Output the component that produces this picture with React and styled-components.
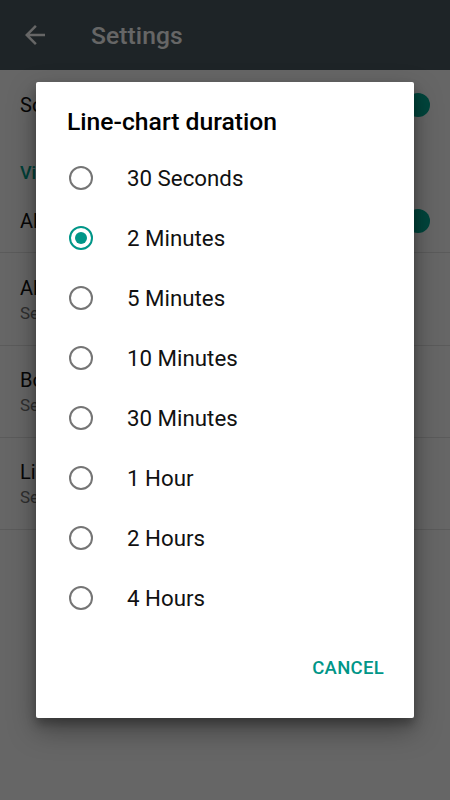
import React from "react";
import styled, { createGlobalStyle } from "styled-components";

const Global = createGlobalStyle`
  html, body { margin: 0; padding: 0; background: #ffffff; }
  body { font-family: Roboto, "Noto Sans", "Liberation Sans", sans-serif; }
  * { box-sizing: border-box; }
`;

const Page = styled.div`
  position: relative;
  width: 450px;
  height: 800px;
  overflow: hidden;
  background: #ffffff;
`;

const Toolbar = styled.header`
  height: 70px;
  background: #4c5b61;
  display: flex;
  align-items: center;
  padding-left: 20px;
  gap: 41px;
  color: #ffffff;
`;

const ToolbarTitle = styled.h1`
  margin: 0;
  font-size: 24.6px;
  font-weight: 500;
  letter-spacing: 0.1px;
`;

const List = styled.div`
  display: flex;
  flex-direction: column;
`;

const Row = styled.div`
  height: ${(p) => p.$h}px;
  display: flex;
  align-items: center;
  justify-content: space-between;
  padding: 0 20px;
  border-bottom: ${(p) => (p.$divider ? "1px solid #e4e4e4" : "none")};
`;

const RowText = styled.div`
  display: flex;
  flex-direction: column;
  gap: 3px;
`;

const RowTitle = styled.div`
  font-size: 20px;
  color: #111;
`;

const RowSub = styled.div`
  font-size: 17px;
  color: #757575;
`;

const Section = styled.div`
  height: 50px;
  display: flex;
  align-items: flex-end;
  padding: 0 20px 7px;
  font-size: 18px;
  font-weight: 500;
  color: #00a08c;
`;

const Switch = styled.div`
  position: relative;
  width: 40px;
  height: 16px;
  border-radius: 8px;
  background: #80cbc0;
  margin-right: 6px;
`;

const Thumb = styled.div`
  position: absolute;
  right: -6px;
  top: -4px;
  width: 24px;
  height: 24px;
  border-radius: 50%;
  background: #00ad96;
`;

const Scrim = styled.div`
  position: absolute;
  inset: 0;
  background: rgba(0, 0, 0, 0.6);
`;

const Dialog = styled.div`
  position: absolute;
  left: 36px;
  top: 82px;
  width: 378px;
  height: 636px;
  background: #ffffff;
  border-radius: 2px;
  box-shadow: 0 12px 28px rgba(0, 0, 0, 0.35), 0 6px 10px rgba(0, 0, 0, 0.25);
  display: flex;
  flex-direction: column;
`;

const DialogTitle = styled.h2`
  margin: 0;
  padding: 26px 31px 12px;
  line-height: 28px;
  font-size: 24.7px;
  font-weight: 500;
  color: #000;
`;

const Options = styled.div`
  display: flex;
  flex-direction: column;
`;

const Option = styled.label`
  height: 60px;
  display: flex;
  align-items: center;
  padding-left: 33px;
  gap: 34px;
  font-size: 22.3px;
  color: #111;
`;

const Radio = styled.span`
  width: 24px;
  height: 24px;
  border-radius: 50%;
  border: 2.4px solid ${(p) => (p.$on ? "#009688" : "#757575")};
  display: flex;
  align-items: center;
  justify-content: center;
  flex: none;
  &::after {
    content: "";
    width: 12px;
    height: 12px;
    border-radius: 50%;
    background: #009688;
    display: ${(p) => (p.$on ? "block" : "none")};
  }
`;

const Actions = styled.div`
  display: flex;
  justify-content: flex-end;
  padding: 22px 22px 0;
`;

const Button = styled.button`
  height: 36px;
  border: none;
  background: transparent;
  font-family: inherit;
  font-size: 18.5px;
  font-weight: 500;
  color: #009688;
  letter-spacing: 0.3px;
  padding: 0 8px;
`;

const options = [
  "30 Seconds",
  "2 Minutes",
  "5 Minutes",
  "10 Minutes",
  "30 Minutes",
  "1 Hour",
  "2 Hours",
  "4 Hours",
];

function BackArrow() {
  return (
    <svg width="30" height="30" viewBox="0 0 24 24" fill="#ffffff">
      <path d="M20 11H7.83l5.59-5.59L12 4l-8 8 8 8 1.41-1.41L7.83 13H20v-2z" />
    </svg>
  );
}

export default function App() {
  return (
    <Page>
      <Global />
      <Toolbar>
        <BackArrow />
        <ToolbarTitle>Settings</ToolbarTitle>
      </Toolbar>
      <List>
        <Row $h={70}>
          <RowTitle>Sound alerts</RowTitle>
          <Switch><Thumb /></Switch>
        </Row>
        <Section>Visual</Section>
        <Row $h={63} $divider>
          <RowTitle>Always on</RowTitle>
          <Switch><Thumb /></Switch>
        </Row>
        <Row $h={93} $divider>
          <RowText>
            <RowTitle>Alert level</RowTitle>
            <RowSub>Select alert level</RowSub>
          </RowText>
        </Row>
        <Row $h={92} $divider>
          <RowText>
            <RowTitle>Border color</RowTitle>
            <RowSub>Select border color</RowSub>
          </RowText>
        </Row>
        <Row $h={92} $divider>
          <RowText>
            <RowTitle>Line-chart duration</RowTitle>
            <RowSub>Select duration</RowSub>
          </RowText>
        </Row>
      </List>
      <Scrim />
      <Dialog>
        <DialogTitle>Line-chart duration</DialogTitle>
        <Options>
          {options.map((o, i) => (
            <Option key={o}>
              <Radio $on={i === 1} />
              {o}
            </Option>
          ))}
        </Options>
        <Actions>
          <Button>CANCEL</Button>
        </Actions>
      </Dialog>
    </Page>
  );
}
